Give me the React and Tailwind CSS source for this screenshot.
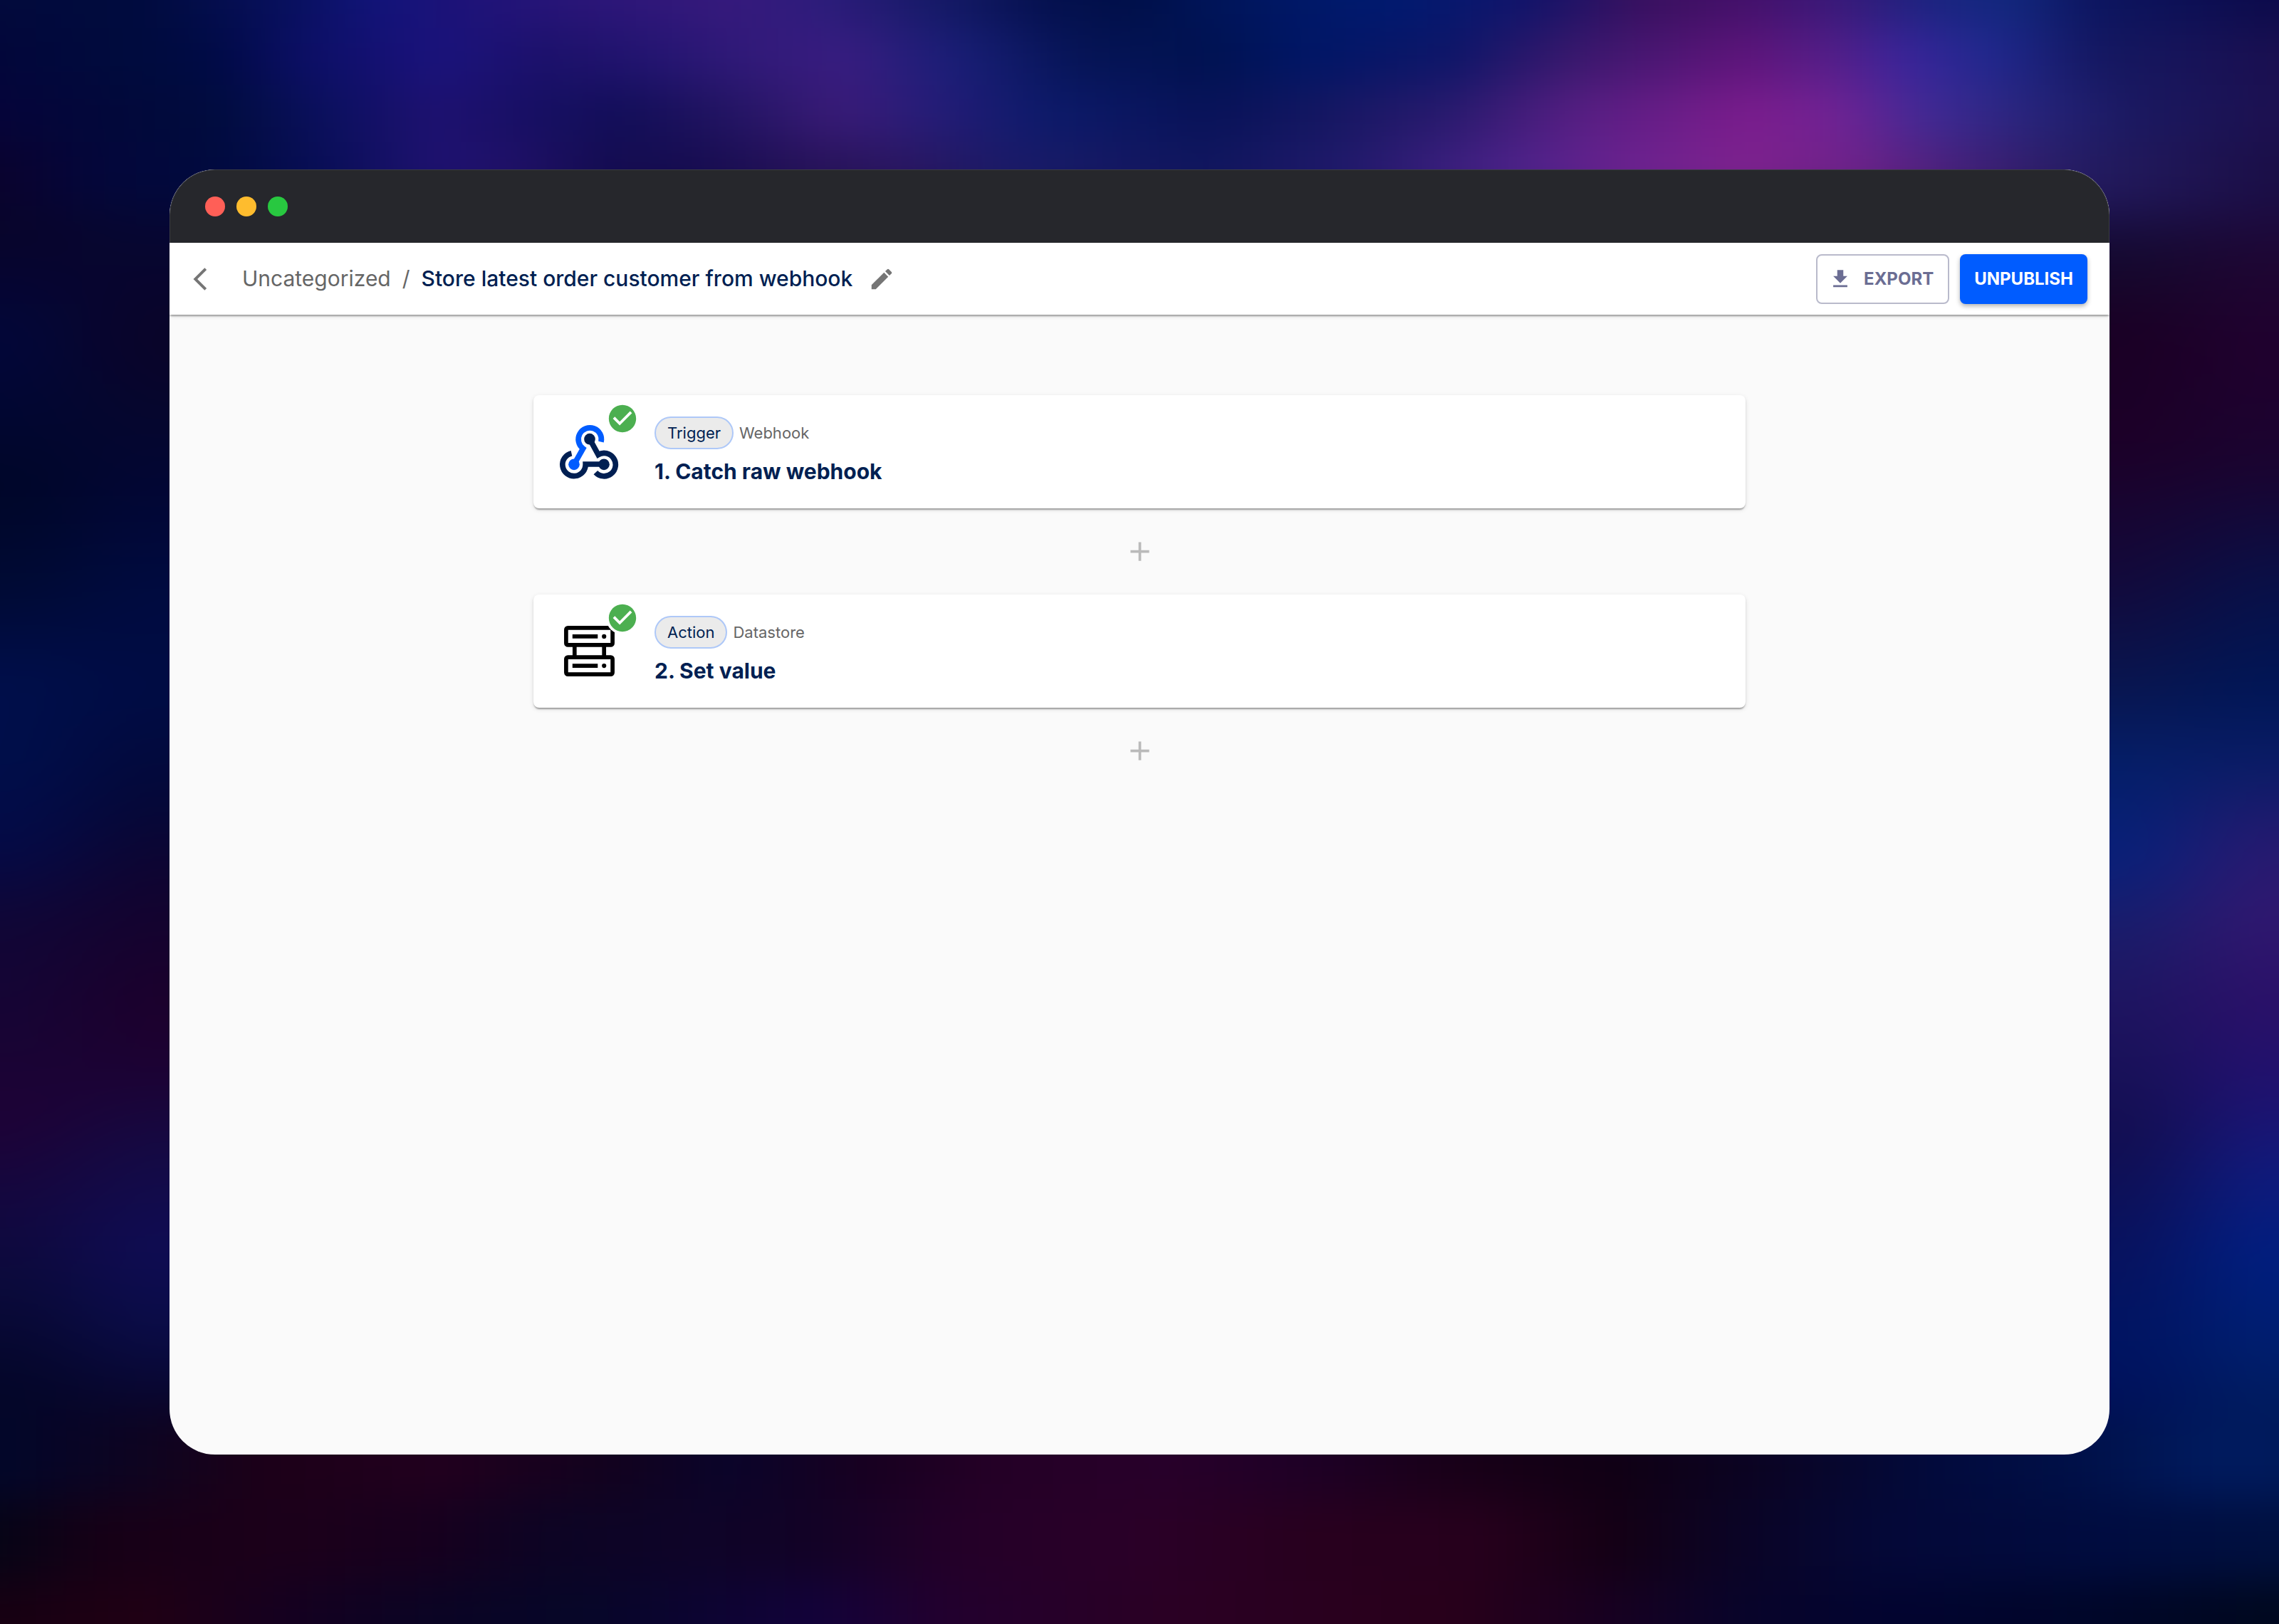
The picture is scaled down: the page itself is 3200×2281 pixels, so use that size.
import React from "react";

const TOP_X = 1568;

const BANDS = [
  {
    y: -120, h: 160,
    stops: [[0,"#020a3c"],[100,"#000b3e"],[200,"#08105e"],[260,"#12147a"],[310,"#1c1278"],[400,"#2a1578"],[500,"#36197c"],[560,"#2e1c7c"],[640,"#161a68"],[720,"#04104e"],[780,"#000f48"],[830,"#001458"],[900,"#001868"],[960,"#001a70"],[1050,"#10146a"],[1130,"#38105e"],[1200,"#44106a"],[1260,"#3a1878"],[1330,"#1a2480"],[1380,"#12287e"],[1440,"#0c1560"],[1568,"#0c0a4a"]],
  },
  {
    y: 40, h: 80,
    stops: [[0,"#02063a"],[100,"#000c3e"],[150,"#000a46"],[210,"#0c0f66"],[300,"#1a127c"],[380,"#1c116a"],[440,"#221470"],[520,"#321a7a"],[580,"#381c80"],[660,"#181e76"],[740,"#061456"],[830,"#001250"],[900,"#001666"],[1000,"#0e1668"],[1080,"#38186c"],[1200,"#5e147a"],[1260,"#541e88"],[1310,"#3a249a"],[1370,"#20288e"],[1440,"#141862"],[1568,"#1a0f50"]],
  },
  {
    y: 120, h: 80,
    stops: [[0,"#05043a"],[80,"#02083a"],[150,"#000c3e"],[230,"#0c1060"],[300,"#1e1170"],[370,"#160f62"],[430,"#120e58"],[500,"#221462"],[580,"#3a1b78"],[640,"#261c78"],[720,"#0c1a6a"],[830,"#081258"],[900,"#121660"],[1000,"#2a1a6e"],[1080,"#541e82"],[1200,"#7a1c8c"],[1260,"#722294"],[1330,"#3e2a94"],[1400,"#26247a"],[1470,"#1a1860"],[1568,"#1c1050"]],
  },
  {
    y: 200, h: 90,
    stops: [[0,"#0a032e"],[60,"#04063a"],[150,"#000a3e"],[220,"#080e56"],[300,"#1e1270"],[350,"#201068"],[420,"#140c50"],[480,"#160c50"],[560,"#261258"],[620,"#2a1660"],[700,"#1a1b68"],[830,"#10165e"],[930,"#221a6c"],[1040,"#4c228a"],[1120,"#6c2290"],[1200,"#7e228e"],[1280,"#6c2288"],[1350,"#442078"],[1430,"#241c62"],[1568,"#1a0e46"]],
  },
  {
    y: 1990, h: 115,
    stops: [[0,"#02062a"],[100,"#0e0420"],[180,"#1c0018"],[300,"#22001e"],[420,"#12021e"],[500,"#0a042a"],[600,"#180020"],[680,"#240026"],[800,"#28002a"],[900,"#1e0026"],[1000,"#180018"],[1110,"#100014"],[1220,"#0a0424"],[1330,"#020a3c"],[1430,"#001048"],[1520,"#001a5e"],[1568,"#001a5c"]],
  },
  {
    y: 2105, h: 115,
    stops: [[0,"#060416"],[70,"#160016"],[200,"#1c001a"],[300,"#16001e"],[380,"#0c0424"],[480,"#0e0428"],[560,"#120226"],[660,"#240028"],[780,"#2a0028"],[900,"#28001e"],[1020,"#26001c"],[1110,"#140014"],[1200,"#0a0426"],[1300,"#040838"],[1450,"#000c40"],[1568,"#001040"]],
  },
  {
    y: 2220, h: 200,
    stops: [[0,"#160012"],[100,"#200014"],[200,"#140020"],[300,"#0a0424"],[400,"#060628"],[560,"#12023a"],[650,"#22002e"],[800,"#2a0024"],[1000,"#28001a"],[1100,"#180020"],[1200,"#08042a"],[1300,"#020430"],[1450,"#000628"],[1568,"#00081e"]],
  },
];

const COLUMNS = [
  {
    x: -300, w: 415,
    stops: [[200,"#0a032e"],[321,"#08052a"],[479,"#02063a"],[685,"#000628"],[830,"#000a34"],[951,"#000e4a"],[1072,"#000e4a"],[1194,"#040a46"],[1290,"#100636"],[1460,"#180434"],[1570,"#1e0236"],[1703,"#120840"],[1812,"#0a0a3a"],[1933,"#04062a"],[2100,"#040420"]],
  },
  {
    x: 115, w: 800,
    stops: [[200,"#000c3e"],[321,"#060632"],[479,"#0a0528"],[685,"#020634"],[830,"#000b40"],[976,"#000c44"],[1121,"#040838"],[1242,"#100430"],[1412,"#1c002c"],[1509,"#1c0234"],[1618,"#140a44"],[1751,"#0f0c54"],[1873,"#0a0c46"],[1982,"#08052a"],[2100,"#1a0018"]],
  },
  {
    x: 2280, w: 800,
    stops: [[240,"#20165e"],[357,"#140a30"],[461,"#1a0024"],[630,"#1c0028"],[826,"#120a3c"],[969,"#081650"],[1073,"#041e68"],[1203,"#08207a"],[1307,"#1a1c6a"],[1411,"#1e1460"],[1594,"#120e50"],[1750,"#08125e"],[1880,"#001462"],[1997,"#001058"]],
  },
  {
    x: 3080, w: 420,
    stops: [[240,"#1a0f4a"],[370,"#1e0632"],[500,"#20002e"],[656,"#1a0430"],[826,"#081048"],[969,"#001656"],[1073,"#0a1c66"],[1177,"#241a70"],[1281,"#301870"],[1411,"#2a1068"],[1542,"#1e1270"],[1646,"#101a7c"],[1763,"#001e80"],[1906,"#001e6c"],[2062,"#00184c"]],
  },
];

function Backdrop() {
  return (
    <svg
      className="absolute inset-0 h-full w-full"
      viewBox="0 0 3200 2281"
      preserveAspectRatio="none"
      aria-hidden="true"
    >
      <defs>
        <filter id="soften" filterUnits="userSpaceOnUse" x="-120" y="-120" width="3440" height="2521" colorInterpolationFilters="sRGB">
          <feGaussianBlur stdDeviation="30" />
        </filter>
        <filter id="spread" filterUnits="userSpaceOnUse" x="-300" y="-120" width="3800" height="2521" colorInterpolationFilters="sRGB">
          <feGaussianBlur stdDeviation="65 0" />
        </filter>
        {BANDS.map((b, i) => (
          <linearGradient key={i} id={`band${i}`} gradientUnits="userSpaceOnUse" x1="0" y1="0" x2="3200" y2="0">
            {b.stops.map(([x, c]) => (
              <stop key={x} offset={x / TOP_X} stopColor={c} />
            ))}
          </linearGradient>
        ))}
        {COLUMNS.map((b, i) => (
          <linearGradient key={i} id={`column${i}`} gradientUnits="userSpaceOnUse" x1="0" y1="0" x2="0" y2="2281">
            {b.stops.map(([y, c]) => (
              <stop key={y} offset={y / 2281} stopColor={c} />
            ))}
          </linearGradient>
        ))}
      </defs>
      <g filter="url(#soften)">
        <rect x="-120" y="-120" width="3440" height="2521" fill="#0a0838" />
        <g filter="url(#spread)">
          {COLUMNS.map((c, i) => (
            <rect key={i} x={c.x} y="200" width={c.w} height="1860" fill={`url(#column${i})`} />
          ))}
        </g>
        {BANDS.map((b, i) => (
          <rect key={i} x="-120" y={b.y} width="3440" height={b.h} fill={`url(#band${i})`} />
        ))}
      </g>
    </svg>
  );
}

function ChevronIcon() {
  return (
    <svg className="size-[38px]" viewBox="0 0 24 24" fill="currentColor" aria-hidden="true">
      <path d="M17.77 3.77 16 2 6 12l10 10 1.77-1.77L9.54 12z" />
    </svg>
  );
}

function PencilIcon() {
  return (
    <svg className="size-[38px]" viewBox="0 0 24 24" fill="currentColor" aria-hidden="true">
      <path d="M3 17.25V21h3.75L17.81 9.94l-3.75-3.75zM20.71 7.04c.39-.39.39-1.02 0-1.41l-2.34-2.34a.996.996 0 0 0-1.41 0l-1.83 1.83 3.75 3.75z" />
    </svg>
  );
}

function DownloadIcon() {
  return (
    <svg className="size-[34px]" viewBox="0 0 24 24" fill="currentColor" aria-hidden="true">
      <path d="M5 20h14v-2H5zM19 9h-4V3H9v6H5l7 7z" />
    </svg>
  );
}

function PlusIcon() {
  return (
    <svg className="size-[45px]" viewBox="0 0 24 24" fill="currentColor" aria-hidden="true">
      <path d="M19 13h-6v6h-2v-6H5v-2h6V5h2v6h6z" />
    </svg>
  );
}

function CheckIcon() {
  return (
    <svg className="size-full" viewBox="0 0 24 24" fill="currentColor" aria-hidden="true">
      <path d="M12 2C6.48 2 2 6.48 2 12s4.48 10 10 10 10-4.48 10-10S17.52 2 12 2m-2 15-5-5 1.41-1.41L10 14.17l7.59-7.59L19 8z" />
    </svg>
  );
}

function WebhookIcon() {
  return (
    <svg className="h-[79px] w-[84px]" viewBox="46 105 252 237" fill="none" strokeWidth="23" aria-hidden="true">
      <path d="M223 182A48.5 48.5 0 1 0 147 210L109 277" stroke="#005cff" />
      <circle cx="109" cy="277" r="23.5" fill="#005cff" />
      <path d="M175 170L211 236A48.5 48.5 0 1 1 200 311" stroke="#001f52" />
      <circle cx="175" cy="170" r="23.5" fill="#001f52" />
      <path d="M98.5 230A48.5 48.5 0 1 0 157.5 276H235" stroke="#001f52" />
      <circle cx="235" cy="277" r="23.5" fill="#001f52" />
    </svg>
  );
}

function DatastoreIcon() {
  return (
    <svg className="size-[71px]" viewBox="0 0 71 71" fill="none" stroke="#000" strokeWidth="5.7" aria-hidden="true">
      <rect x="2.9" y="2.9" width="65.2" height="24" rx="2.5" />
      <rect x="2.9" y="44.1" width="65.2" height="24" rx="2.5" />
      <path d="M14.8 28v15M56.2 28v15M11.8 14.9h35.5M11.8 56.1h35.5" />
      <circle cx="56.2" cy="14.9" r="3.1" fill="#000" stroke="none" />
      <circle cx="56.2" cy="56.1" r="3.1" fill="#000" stroke="none" />
    </svg>
  );
}

function StepCard({ icon, kind, app, title }) {
  return (
    <article className="flex w-full items-start rounded-[8px] bg-white pt-[30px] pr-9 pb-[34px] pl-9 shadow-[0_4px_2px_-2px_rgba(0,0,0,0.2),0_2px_2px_0_rgba(0,0,0,0.14),0_2px_6px_0_rgba(0,0,0,0.12)]">
      <div className="relative mr-[50px] flex h-[95px] w-[84px] shrink-0 items-center justify-center pt-1">
        {icon}
        <span className="absolute -top-5 left-[66px] size-[46px] rounded-full bg-white text-[#4caf50]">
          <CheckIcon />
        </span>
      </div>
      <div>
        <div className="flex items-center gap-2">
          <span className="flex h-[46px] items-center rounded-full border-2 border-[#aec8f8] bg-[#ebebeb] px-4 text-[22px] text-[#001f52]">
            {kind}
          </span>
          <span className="text-[22px] text-[#666]">{app}</span>
        </div>
        <h2 className="mt-[13px] text-[30px] leading-9 font-bold text-[#001f52]">{title}</h2>
      </div>
    </article>
  );
}

function AddStep() {
  return (
    <button type="button" aria-label="Add step" className="flex h-[121px] items-center justify-center px-4 text-[#bababa]">
      <PlusIcon />
    </button>
  );
}

export default function App() {
  return (
    <div className="relative isolate flex min-h-screen flex-col bg-[#0a0838] p-[238px] font-['Inter','Roboto',sans-serif]">
      <Backdrop />
      <div className="relative flex flex-1 flex-col overflow-hidden rounded-[64px] bg-[#fafafa]">
        <div className="flex h-[103px] shrink-0 items-center gap-4 rounded-t-[64px] border border-b-0 border-[#3b3c42] bg-[#26272c] pl-[49px]">
          <span className="size-7 rounded-full bg-[#ff5f57]" />
          <span className="size-7 rounded-full bg-[#febc2e]" />
          <span className="size-7 rounded-full bg-[#28c840]" />
        </div>
        <header className="relative flex h-[101px] shrink-0 items-center justify-between bg-white pr-[31px] pl-6 shadow-[0_4px_2px_-2px_rgba(0,0,0,0.2),0_2px_2px_0_rgba(0,0,0,0.14),0_2px_6px_0_rgba(0,0,0,0.12)]">
          <div className="flex items-center">
            <button type="button" aria-label="Back" className="mr-10 text-[#757575]">
              <ChevronIcon />
            </button>
            <nav className="flex items-center gap-4 text-[30px]">
              <a href="#uncategorized" className="text-[#666]">Uncategorized</a>
              <span className="text-[#666]">/</span>
              <h1 className="font-medium text-[#001f52]">Store latest order customer from webhook</h1>
            </nav>
            <button type="button" aria-label="Rename" className="ml-[22px] text-[#757575]">
              <PencilIcon />
            </button>
          </div>
          <div className="flex items-center gap-[15px]">
            <button type="button" className="flex h-[70px] items-center gap-4 rounded-[8px] border-2 border-[#b9bacb] pr-5 pl-[15px] text-[24px] font-bold text-[#6b6d93]">
              <DownloadIcon />
              EXPORT
            </button>
            <button type="button" className="flex h-[70px] items-center rounded-[8px] bg-[#005cff] px-5 text-[24px] font-bold text-white shadow-[0_3px_6px_rgba(0,0,0,0.3)]">
              UNPUBLISH
            </button>
          </div>
        </header>
        <main className="mx-auto flex w-full max-w-[1702px] flex-col items-center pt-[113px]">
          <StepCard icon={<WebhookIcon />} kind="Trigger" app="Webhook" title="1. Catch raw webhook" />
          <AddStep />
          <StepCard icon={<DatastoreIcon />} kind="Action" app="Datastore" title="2. Set value" />
          <AddStep />
        </main>
      </div>
    </div>
  );
}
